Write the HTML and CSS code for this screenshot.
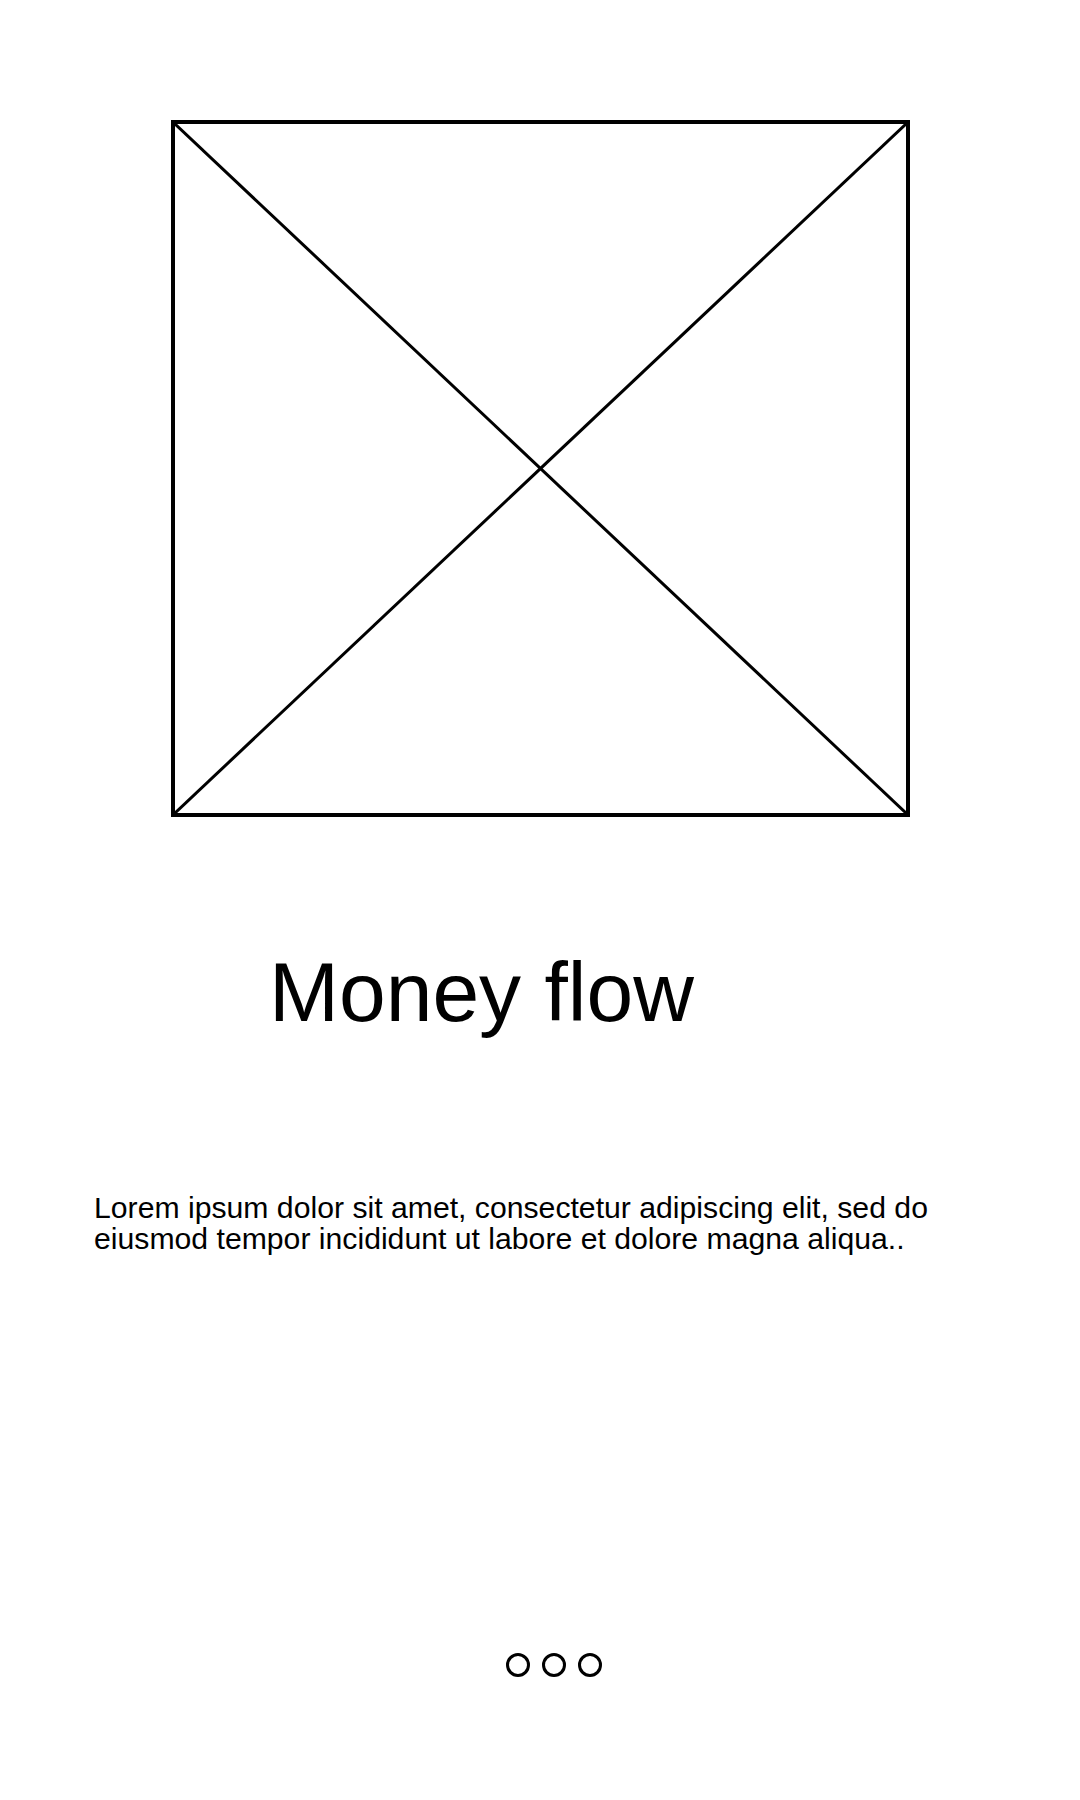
FILE: index.html
```html
<!DOCTYPE html>
<html lang="en">
<head>
<meta charset="utf-8">
<title>Money flow</title>
<link rel="stylesheet" href="styles.css">
</head>
<body>
<main class="screen">
  <div class="frame">
    <svg class="cross" viewBox="0 0 100 100" preserveAspectRatio="none" aria-hidden="true">
      <line x1="0" y1="0" x2="100" y2="100" vector-effect="non-scaling-stroke"/>
      <line x1="100" y1="0" x2="0" y2="100" vector-effect="non-scaling-stroke"/>
    </svg>
  </div>
  <h1 class="title">Money flow</h1>
  <p class="text">Lorem ipsum dolor sit amet, consectetur adipiscing elit, sed do eiusmod tempor incididunt ut labore et dolore magna aliqua..</p>
  <div class="dots">
    <span class="dot"></span>
    <span class="dot"></span>
    <span class="dot"></span>
  </div>
</main>
</body>
</html>
```
FILE: styles.css
```css
html, body {
  margin: 0;
  padding: 0;
  background: #ffffff;
}

body {
  font-family: "Liberation Sans", Arial, sans-serif;
  color: #000000;
}

.screen {
  width: 1080px;
  height: 1800px;
  padding-top: 120px;
  box-sizing: border-box;
}

.frame {
  position: relative;
  width: 739px;
  height: 697px;
  margin: 0 auto;
  border: 4px solid #000;
  box-sizing: border-box;
}

.cross {
  position: absolute;
  left: 0;
  top: 0;
  width: 100%;
  height: 100%;
  display: block;
}

.cross line {
  stroke: #000;
  stroke-width: 3px;
}

.title {
  margin: 127px 0 0 0;
  padding-left: 269px;
  font-size: 84px;
  font-weight: 400;
  line-height: 96px;
}

.text {
  margin: 152px 0 0 0;
  padding-left: 94px;
  max-width: 860px;
  font-size: 30.2px;
  line-height: 31px;
}

.dots {
  display: flex;
  gap: 12px;
  margin-top: 399px;
  padding-left: 506px;
}

.dot {
  width: 24px;
  height: 24px;
  border: 3px solid #000;
  border-radius: 50%;
  box-sizing: border-box;
}
```
